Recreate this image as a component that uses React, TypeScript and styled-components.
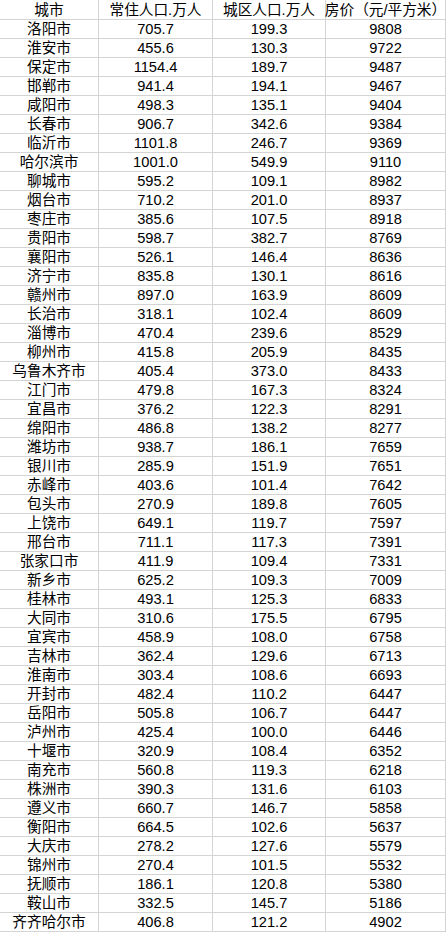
import React from 'react'
import styled, { createGlobalStyle } from 'styled-components'

const GlobalStyle = createGlobalStyle`
  html, body {
    margin: 0;
    padding: 0;
    background: #ffffff;
  }
  body {
    font-family: "Liberation Sans", "Noto Sans CJK SC", sans-serif;
    color: #000000;
  }
`

const Sheet = styled.div`
  display: grid;
  grid-template-columns: 99px 114px 113px 120px;
  width: 446px;
`

const Cell = styled.div<{ $head?: boolean }>`
  box-sizing: border-box;
  height: ${(p) => (p.$head ? '20px' : '19px')};
  border-right: 1px solid #d4d4d4;
  border-bottom: 1px solid #d4d4d4;
  display: flex;
  align-items: flex-end;
  justify-content: center;
  font-size: 11pt;
  line-height: 18px;
  white-space: nowrap;
  overflow: visible;
`

const rows: [string, string, string, string][] = [
  ['洛阳市', '705.7', '199.3', '9808'],
  ['淮安市', '455.6', '130.3', '9722'],
  ['保定市', '1154.4', '189.7', '9487'],
  ['邯郸市', '941.4', '194.1', '9467'],
  ['咸阳市', '498.3', '135.1', '9404'],
  ['长春市', '906.7', '342.6', '9384'],
  ['临沂市', '1101.8', '246.7', '9369'],
  ['哈尔滨市', '1001.0', '549.9', '9110'],
  ['聊城市', '595.2', '109.1', '8982'],
  ['烟台市', '710.2', '201.0', '8937'],
  ['枣庄市', '385.6', '107.5', '8918'],
  ['贵阳市', '598.7', '382.7', '8769'],
  ['襄阳市', '526.1', '146.4', '8636'],
  ['济宁市', '835.8', '130.1', '8616'],
  ['赣州市', '897.0', '163.9', '8609'],
  ['长治市', '318.1', '102.4', '8609'],
  ['淄博市', '470.4', '239.6', '8529'],
  ['柳州市', '415.8', '205.9', '8435'],
  ['乌鲁木齐市', '405.4', '373.0', '8433'],
  ['江门市', '479.8', '167.3', '8324'],
  ['宜昌市', '376.2', '122.3', '8291'],
  ['绵阳市', '486.8', '138.2', '8277'],
  ['潍坊市', '938.7', '186.1', '7659'],
  ['银川市', '285.9', '151.9', '7651'],
  ['赤峰市', '403.6', '101.4', '7642'],
  ['包头市', '270.9', '189.8', '7605'],
  ['上饶市', '649.1', '119.7', '7597'],
  ['邢台市', '711.1', '117.3', '7391'],
  ['张家口市', '411.9', '109.4', '7331'],
  ['新乡市', '625.2', '109.3', '7009'],
  ['桂林市', '493.1', '125.3', '6833'],
  ['大同市', '310.6', '175.5', '6795'],
  ['宜宾市', '458.9', '108.0', '6758'],
  ['吉林市', '362.4', '129.6', '6713'],
  ['淮南市', '303.4', '108.6', '6693'],
  ['开封市', '482.4', '110.2', '6447'],
  ['岳阳市', '505.8', '106.7', '6447'],
  ['泸州市', '425.4', '100.0', '6446'],
  ['十堰市', '320.9', '108.4', '6352'],
  ['南充市', '560.8', '119.3', '6218'],
  ['株洲市', '390.3', '131.6', '6103'],
  ['遵义市', '660.7', '146.7', '5858'],
  ['衡阳市', '664.5', '102.6', '5637'],
  ['大庆市', '278.2', '127.6', '5579'],
  ['锦州市', '270.4', '101.5', '5532'],
  ['抚顺市', '186.1', '120.8', '5380'],
  ['鞍山市', '332.5', '145.7', '5186'],
  ['齐齐哈尔市', '406.8', '121.2', '4902'],
]

const headers = ['城市', '常住人口.万人', '城区人口.万人', '房价（元/平方米）']

export default function App() {
  return (
    <>
      <GlobalStyle />
      <Sheet>
        {headers.map((h) => (
          <Cell key={h} $head>
            {h}
          </Cell>
        ))}
        {rows.map((r) =>
          r.map((v, i) => <Cell key={r[0] + i}>{v}</Cell>)
        )}
      </Sheet>
    </>
  )
}
